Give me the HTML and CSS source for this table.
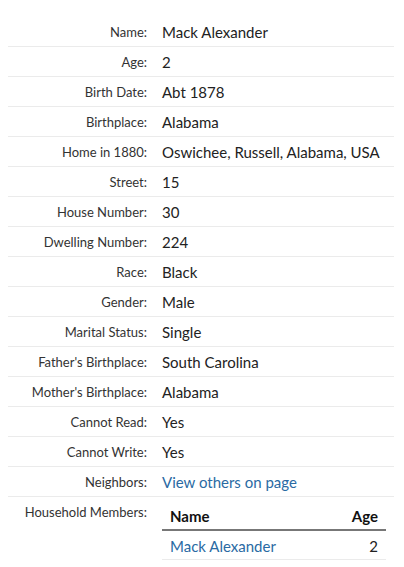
FILE: index.html
```html
<!DOCTYPE html>
<html>
<head>
<meta charset="utf-8">
<link rel="stylesheet" href="styles.css">
</head>
<body>
<div class="record">
  <div class="row"><div class="label">Name:</div><div class="value">Mack Alexander</div></div>
  <div class="row"><div class="label">Age:</div><div class="value">2</div></div>
  <div class="row"><div class="label">Birth Date:</div><div class="value">Abt 1878</div></div>
  <div class="row"><div class="label">Birthplace:</div><div class="value">Alabama</div></div>
  <div class="row"><div class="label">Home in 1880:</div><div class="value">Oswichee, Russell, Alabama, USA</div></div>
  <div class="row"><div class="label">Street:</div><div class="value">15</div></div>
  <div class="row"><div class="label">House Number:</div><div class="value">30</div></div>
  <div class="row"><div class="label">Dwelling Number:</div><div class="value">224</div></div>
  <div class="row"><div class="label">Race:</div><div class="value">Black</div></div>
  <div class="row"><div class="label">Gender:</div><div class="value">Male</div></div>
  <div class="row"><div class="label">Marital Status:</div><div class="value">Single</div></div>
  <div class="row"><div class="label">Father's Birthplace:</div><div class="value">South Carolina</div></div>
  <div class="row"><div class="label">Mother's Birthplace:</div><div class="value">Alabama</div></div>
  <div class="row"><div class="label">Cannot Read:</div><div class="value">Yes</div></div>
  <div class="row"><div class="label">Cannot Write:</div><div class="value">Yes</div></div>
  <div class="row"><div class="label">Neighbors:</div><div class="value"><a class="link" href="#">View others on page</a></div></div>
  <div class="row last"><div class="label">Household Members:</div>
    <div class="value">
      <table class="members">
        <thead><tr><th class="c-name">Name</th><th class="c-age">Age</th></tr></thead>
        <tbody><tr><td class="c-name"><a class="link" href="#">Mack Alexander</a></td><td class="c-age">2</td></tr></tbody>
      </table>
    </div>
  </div>
</div>
</body>
</html>
```
FILE: styles.css
```css
html, body {
  margin: 0;
  padding: 0;
  background: #fff;
}
body {
  font-family: Lato, "Noto Sans", "Liberation Sans", sans-serif;
  color: #333;
}
.record {
  margin: 17px 10px 0 8px;
}
.row {
  display: grid;
  grid-template-columns: 147px 1fr;
  border-bottom: 1px solid #ebebeb;
}
.row.last {
  border-bottom: none;
}
.label {
  text-align: right;
  padding: 5px 8px 4px 0;
  font-size: 13px;
  line-height: 20px;
  color: #333;
}
.value {
  padding: 5px 8px 4px 7px;
  font-size: 15px;
  line-height: 20px;
  color: #222;
  white-space: nowrap;
}
.link {
  color: #2a6aa3;
  text-decoration: none;
}
.members {
  width: 100%;
  border-collapse: collapse;
  font-size: 15px;
  line-height: 20px;
}
.members th {
  font-weight: bold;
  color: #111;
  padding: 4px 8px 3px 8px;
  border-bottom: 2px solid #777;
}
.members td {
  padding: 5px 8px 3px 8px;
  border-bottom: 1px solid #ebebeb;
}
.c-name { text-align: left; }
.c-age { text-align: right; }
```
